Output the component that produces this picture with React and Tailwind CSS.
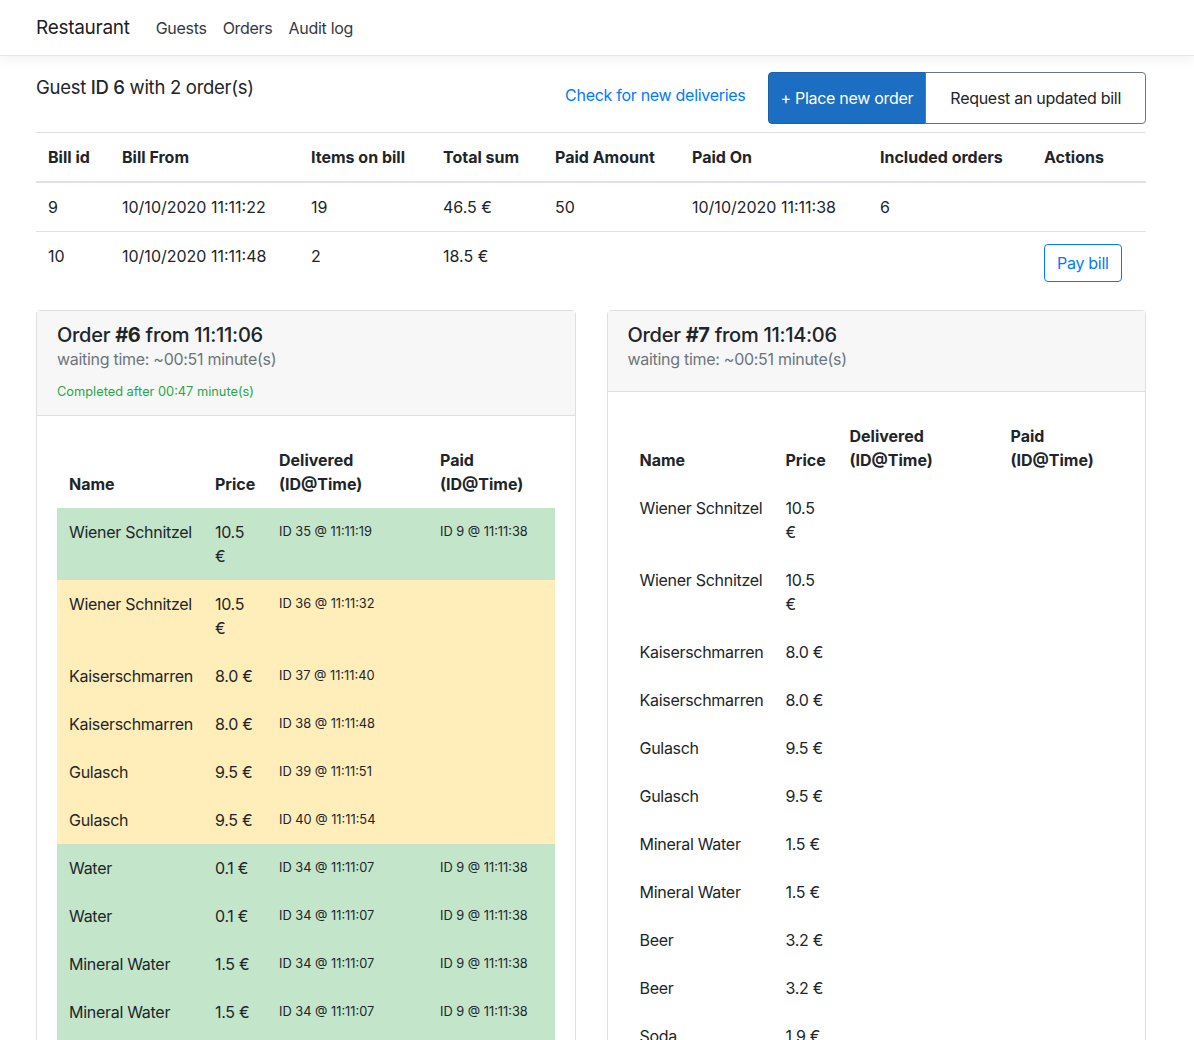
const bills = [
  { id: '9', from: '10/10/2020 11:11:22', items: '19', total: '46.5 €', paid: '50', paidOn: '10/10/2020 11:11:38', orders: '6', pay: false },
  { id: '10', from: '10/10/2020 11:11:48', items: '2', total: '18.5 €', paid: '', paidOn: '', orders: '', pay: true },
]

const billCols = [74, 189, 132, 112, 137, 188, 164, 114]
const billHead = ['Bill id', 'Bill From', 'Items on bill', 'Total sum', 'Paid Amount', 'Paid On', 'Included orders', 'Actions']

// s = status: 'ok' paid+delivered, 'wait' delivered only
const order6 = [
  { name: 'Wiener Schnitzel', price: '10.5', wrap: true, del: 'ID 35 @ 11:11:19', paid: 'ID 9 @ 11:11:38', s: 'ok' },
  { name: 'Wiener Schnitzel', price: '10.5', wrap: true, del: 'ID 36 @ 11:11:32', paid: '', s: 'wait' },
  { name: 'Kaiserschmarren', price: '8.0', del: 'ID 37 @ 11:11:40', paid: '', s: 'wait' },
  { name: 'Kaiserschmarren', price: '8.0', del: 'ID 38 @ 11:11:48', paid: '', s: 'wait' },
  { name: 'Gulasch', price: '9.5', del: 'ID 39 @ 11:11:51', paid: '', s: 'wait' },
  { name: 'Gulasch', price: '9.5', del: 'ID 40 @ 11:11:54', paid: '', s: 'wait' },
  { name: 'Water', price: '0.1', del: 'ID 34 @ 11:11:07', paid: 'ID 9 @ 11:11:38', s: 'ok' },
  { name: 'Water', price: '0.1', del: 'ID 34 @ 11:11:07', paid: 'ID 9 @ 11:11:38', s: 'ok' },
  { name: 'Mineral Water', price: '1.5', del: 'ID 34 @ 11:11:07', paid: 'ID 9 @ 11:11:38', s: 'ok' },
  { name: 'Mineral Water', price: '1.5', del: 'ID 34 @ 11:11:07', paid: 'ID 9 @ 11:11:38', s: 'ok' },
  { name: 'Beer', price: '3.2', del: 'ID 34 @ 11:11:07', paid: 'ID 9 @ 11:11:38', s: 'ok' },
]

const order7 = [
  { name: 'Wiener Schnitzel', price: '10.5', wrap: true },
  { name: 'Wiener Schnitzel', price: '10.5', wrap: true },
  { name: 'Kaiserschmarren', price: '8.0' },
  { name: 'Kaiserschmarren', price: '8.0' },
  { name: 'Gulasch', price: '9.5' },
  { name: 'Gulasch', price: '9.5' },
  { name: 'Mineral Water', price: '1.5' },
  { name: 'Mineral Water', price: '1.5' },
  { name: 'Beer', price: '3.2' },
  { name: 'Beer', price: '3.2' },
  { name: 'Soda', price: '1.9' },
  { name: 'Soda', price: '1.9' },
]

const ROW_BG = { ok: 'bg-[#c3e6cb]', wait: 'bg-[#ffeeba]' }

function OrderCard({ num, from, completed, items }) {
  return (
    <div className="rounded border border-[#dfdfdf] bg-white">
      <div className="border-b border-[#dfdfdf] bg-[#f7f7f7] px-5 py-3">
        <h5 className="text-[20px] font-medium leading-[1.2]">
          Order <b className="font-bold">#{num}</b> from {from}
        </h5>
        <h6 className="mb-2 text-[16px] leading-6 text-[#6c757d]">waiting time: ~00:51 minute(s)</h6>
        {completed && (
          <div className="leading-[22px]">
            <small className="text-[12.8px] tracking-normal text-[#28a745]">Completed after {completed} minute(s)</small>
          </div>
        )}
      </div>
      <div className="p-5">
        <table className="w-full table-fixed border-collapse">
          <colgroup>
            <col className="w-[146px]" />
            <col className="w-[64px]" />
            <col className="w-[161px]" />
            <col />
          </colgroup>
          <thead>
            <tr className="text-left tracking-normal">
              <th className="px-3 py-3 align-bottom font-bold">Name</th>
              <th className="px-3 py-3 align-bottom font-bold">Price</th>
              <th className="px-3 py-3 align-bottom font-bold">Delivered<br />(ID@Time)</th>
              <th className="px-3 py-3 align-bottom font-bold">Paid<br />(ID@Time)</th>
            </tr>
          </thead>
          <tbody>
            {items.map((it, i) => (
              <tr key={i} className={ROW_BG[it.s] || ''}>
                <td className="whitespace-nowrap px-3 py-3 align-top">{it.name}</td>
                <td className="whitespace-nowrap px-3 py-3 align-top">
                  {it.price}{it.wrap ? <br /> : ' '}€
                </td>
                <td className="whitespace-nowrap px-3 py-3 align-top text-[12.8px] leading-6 tracking-normal">{it.del}</td>
                <td className="whitespace-nowrap px-3 py-3 align-top text-[12.8px] leading-6 tracking-normal">{it.paid}</td>
              </tr>
            ))}
          </tbody>
        </table>
      </div>
    </div>
  )
}

export default function App() {
  return (
    <div className="min-h-screen bg-white font-['Inter','Liberation_Sans',sans-serif] text-[16px] leading-6 tracking-[-0.018em] text-[#212529]">
      {/* Navbar */}
      <nav className="h-[56px] border-b border-[#e5e5e5] bg-white shadow-[0_4px_12px_rgba(0,0,0,0.05)]">
        <div className="ml-[36px] flex h-full items-center">
          <span className="mr-[18px] text-[19px] text-black/90">Restaurant</span>
          <a className="px-2 text-[#343a40]">Guests</a>
          <a className="px-2 text-[#343a40]">Orders</a>
          <a className="px-2 text-[#343a40]">Audit log</a>
        </div>
      </nav>

      <main className="ml-[36px] mt-4 w-[1110px]">
        {/* Header row */}
        <div className="flex items-start justify-between">
          <h5 className="text-[18.5px] leading-[30px]">
            Guest <span className="font-medium">ID 6</span> with 2 order(s)
          </h5>
          <div className="flex items-center">
            <a className="-mt-[6px] mr-[22px] text-[#007bff]">Check for new deliveries</a>
            <div className="flex">
              <button className="rounded-l border border-[#1861ac] bg-[#1b6ec2] px-3 py-[13px] leading-6 text-white">
                + Place new order
              </button>
              <button className="-ml-px rounded-r border border-[#6c757d] bg-white px-6 py-[13px] leading-6 text-[#212529]">
                Request an updated bill
              </button>
            </div>
          </div>
        </div>

        {/* Bills table */}
        <table className="mt-2 w-full table-fixed border-collapse tracking-normal">
          <colgroup>
            {billCols.map((w, i) => <col key={i} style={{ width: w }} />)}
          </colgroup>
          <thead>
            <tr className="text-left">
              {billHead.map(h => (
                <th key={h} className="border-t border-b-2 border-t-[#dee2e6] border-b-[#dee2e6] px-3 py-3 font-bold">{h}</th>
              ))}
            </tr>
          </thead>
          <tbody>
            {bills.map((b, i) => (
              <tr key={b.id}>
                {[b.id, b.from, b.items, b.total, b.paid, b.paidOn, b.orders].map((v, j) => (
                  <td key={j} className={(i > 0 ? 'border-t border-[#dee2e6] ' : '') + 'whitespace-nowrap px-3 py-3 align-top'}>{v}</td>
                ))}
                <td className={(i > 0 ? 'border-t border-[#dee2e6] ' : '') + 'px-3 py-3 align-top'}>
                  {b.pay && (
                    <button className="rounded border border-[#007bff] px-3 py-[6px] leading-6 tracking-[-0.018em] text-[#007bff]">Pay bill</button>
                  )}
                </td>
              </tr>
            ))}
          </tbody>
        </table>

        {/* Orders */}
        <div className="mt-4 grid grid-cols-2 items-start gap-[31px]">
          <OrderCard num="6" from="11:11:06" completed="00:47" items={order6} />
          <OrderCard num="7" from="11:14:06" items={order7} />
        </div>
      </main>
    </div>
  )
}
